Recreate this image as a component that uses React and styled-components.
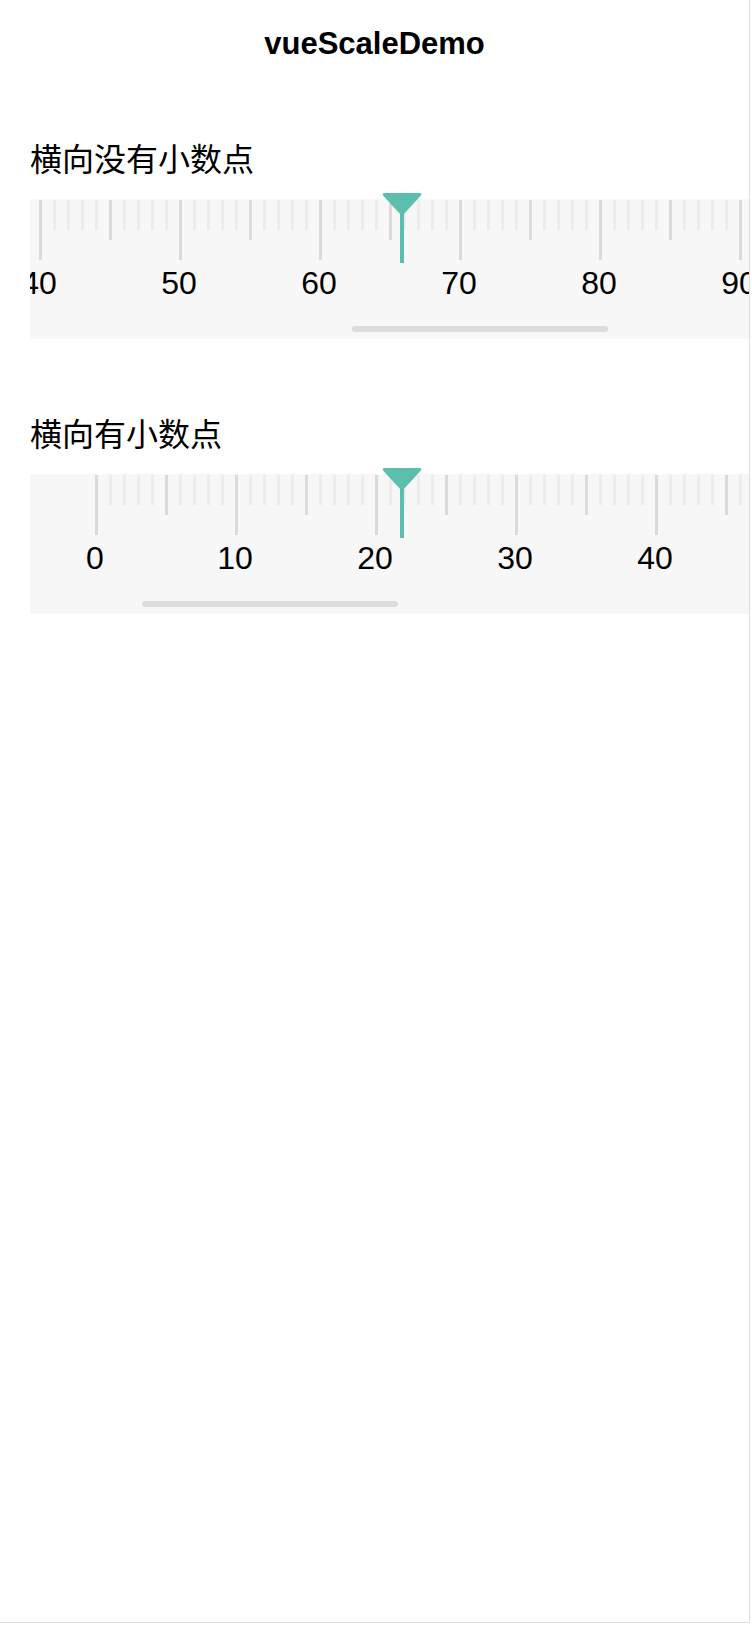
import styled, { createGlobalStyle } from 'styled-components';

const GlobalStyle = createGlobalStyle`
  * {
    box-sizing: border-box;
  }
  body {
    margin: 0;
    background: #ffffff;
    font-family: 'Liberation Sans', Arial, sans-serif;
    color: #000;
  }
`;

const STEP = 14;

const buildTicks = (from, to) => {
  const ticks = [];
  for (let v = from; v <= to; v++) {
    let kind = 'minor';
    if (v % 10 === 0) kind = 'major';
    else if (v % 5 === 0) kind = 'mid';
    ticks.push({ value: v, kind });
  }
  return ticks;
};

const rulers = [
  {
    id: 1,
    title: '横向没有小数点',
    ticks: buildTicks(40, 91),
    offset: 3,
    thumbLeft: 322,
  },
  {
    id: 2,
    title: '横向有小数点',
    ticks: buildTicks(0, 47),
    offset: 59,
    thumbLeft: 112,
  },
];

const Pointer = () => (
  <PointerSvg width="42" height="70" viewBox="0 0 42 70">
    <path d="M4 0 H38 Q42 0 39.5 3 L21 23 L2.5 3 Q0 0 4 0 Z" fill="#5cbfad" />
    <rect x="19" y="16" width="4" height="54" fill="#5cbfad" />
  </PointerSvg>
);

const App = () => {
  return (
    <>
      <GlobalStyle />
      <Page>
        <Header>vueScaleDemo</Header>

        {rulers.map((ruler, i) => (
          <Section key={ruler.id} $first={i === 0}>
            <Label>{ruler.title}</Label>
            <RulerWrap>
              <Track>
                <Strip $offset={ruler.offset}>
                  {ruler.ticks.map((t) => (
                    <Cell key={t.value}>
                      <TickSlot>
                        <Tick $kind={t.kind} />
                      </TickSlot>
                      {t.kind === 'major' && <Num>{t.value}</Num>}
                    </Cell>
                  ))}
                </Strip>
                <Thumb $left={ruler.thumbLeft} />
              </Track>
              <Pointer />
            </RulerWrap>
          </Section>
        ))}
      </Page>
    </>
  );
};

export default App;

const Page = styled.div`
  width: 750px;
  min-height: 1623px;
  border-right: 1px solid #dcdcdc;
  border-bottom: 1px solid #dcdcdc;
  background: #ffffff;
`;

const Header = styled.h1`
  margin: 0;
  height: 88px;
  line-height: 88px;
  text-align: center;
  font-family: 'Liberation Sans', Arial, sans-serif;
  font-weight: bold;
  font-size: 31px;
  color: #000;
`;

const Section = styled.section`
  display: flex;
  flex-direction: column;
  padding-left: 30px;
  margin-top: ${(p) => (p.$first ? '47px' : '71px')};
`;

const Label = styled.div`
  font-family: 'Noto Sans CJK SC', 'Liberation Sans', sans-serif;
  font-size: 32px;
  line-height: 44px;
  height: 44px;
  color: #000;
  margin-bottom: 20px;
`;

const RulerWrap = styled.div`
  position: relative;
`;

const Track = styled.div`
  position: relative;
  height: 140px;
  background: #f7f7f7;
  overflow: hidden;
`;

const Strip = styled.div`
  display: flex;
  padding-left: ${(p) => p.$offset}px;
  padding-top: 1px;
`;

const Cell = styled.div`
  flex: 0 0 ${STEP}px;
  width: ${STEP}px;
  display: flex;
  flex-direction: column;
  align-items: center;
`;

const TickSlot = styled.div`
  height: 60px;
  display: flex;
  justify-content: center;
`;

const tickHeights = { major: 60, mid: 40, minor: 30 };
const tickColors = { major: '#dadada', mid: '#dadada', minor: '#ececec' };

const Tick = styled.div`
  width: 3px;
  height: ${(p) => tickHeights[p.$kind]}px;
  background: ${(p) => tickColors[p.$kind]};
`;

const Num = styled.div`
  margin-top: 7px;
  margin-right: 2px;
  font-family: 'Liberation Sans', Arial, sans-serif;
  font-size: 32px;
  line-height: 32px;
  white-space: nowrap;
  color: #000;
`;

const Thumb = styled.div`
  position: absolute;
  top: 127px;
  left: ${(p) => p.$left}px;
  width: 256px;
  height: 6px;
  border-radius: 3px;
  background: #dcdcdc;
`;

const PointerSvg = styled.svg`
  position: absolute;
  top: -6px;
  left: 351px;
  display: block;
`;
